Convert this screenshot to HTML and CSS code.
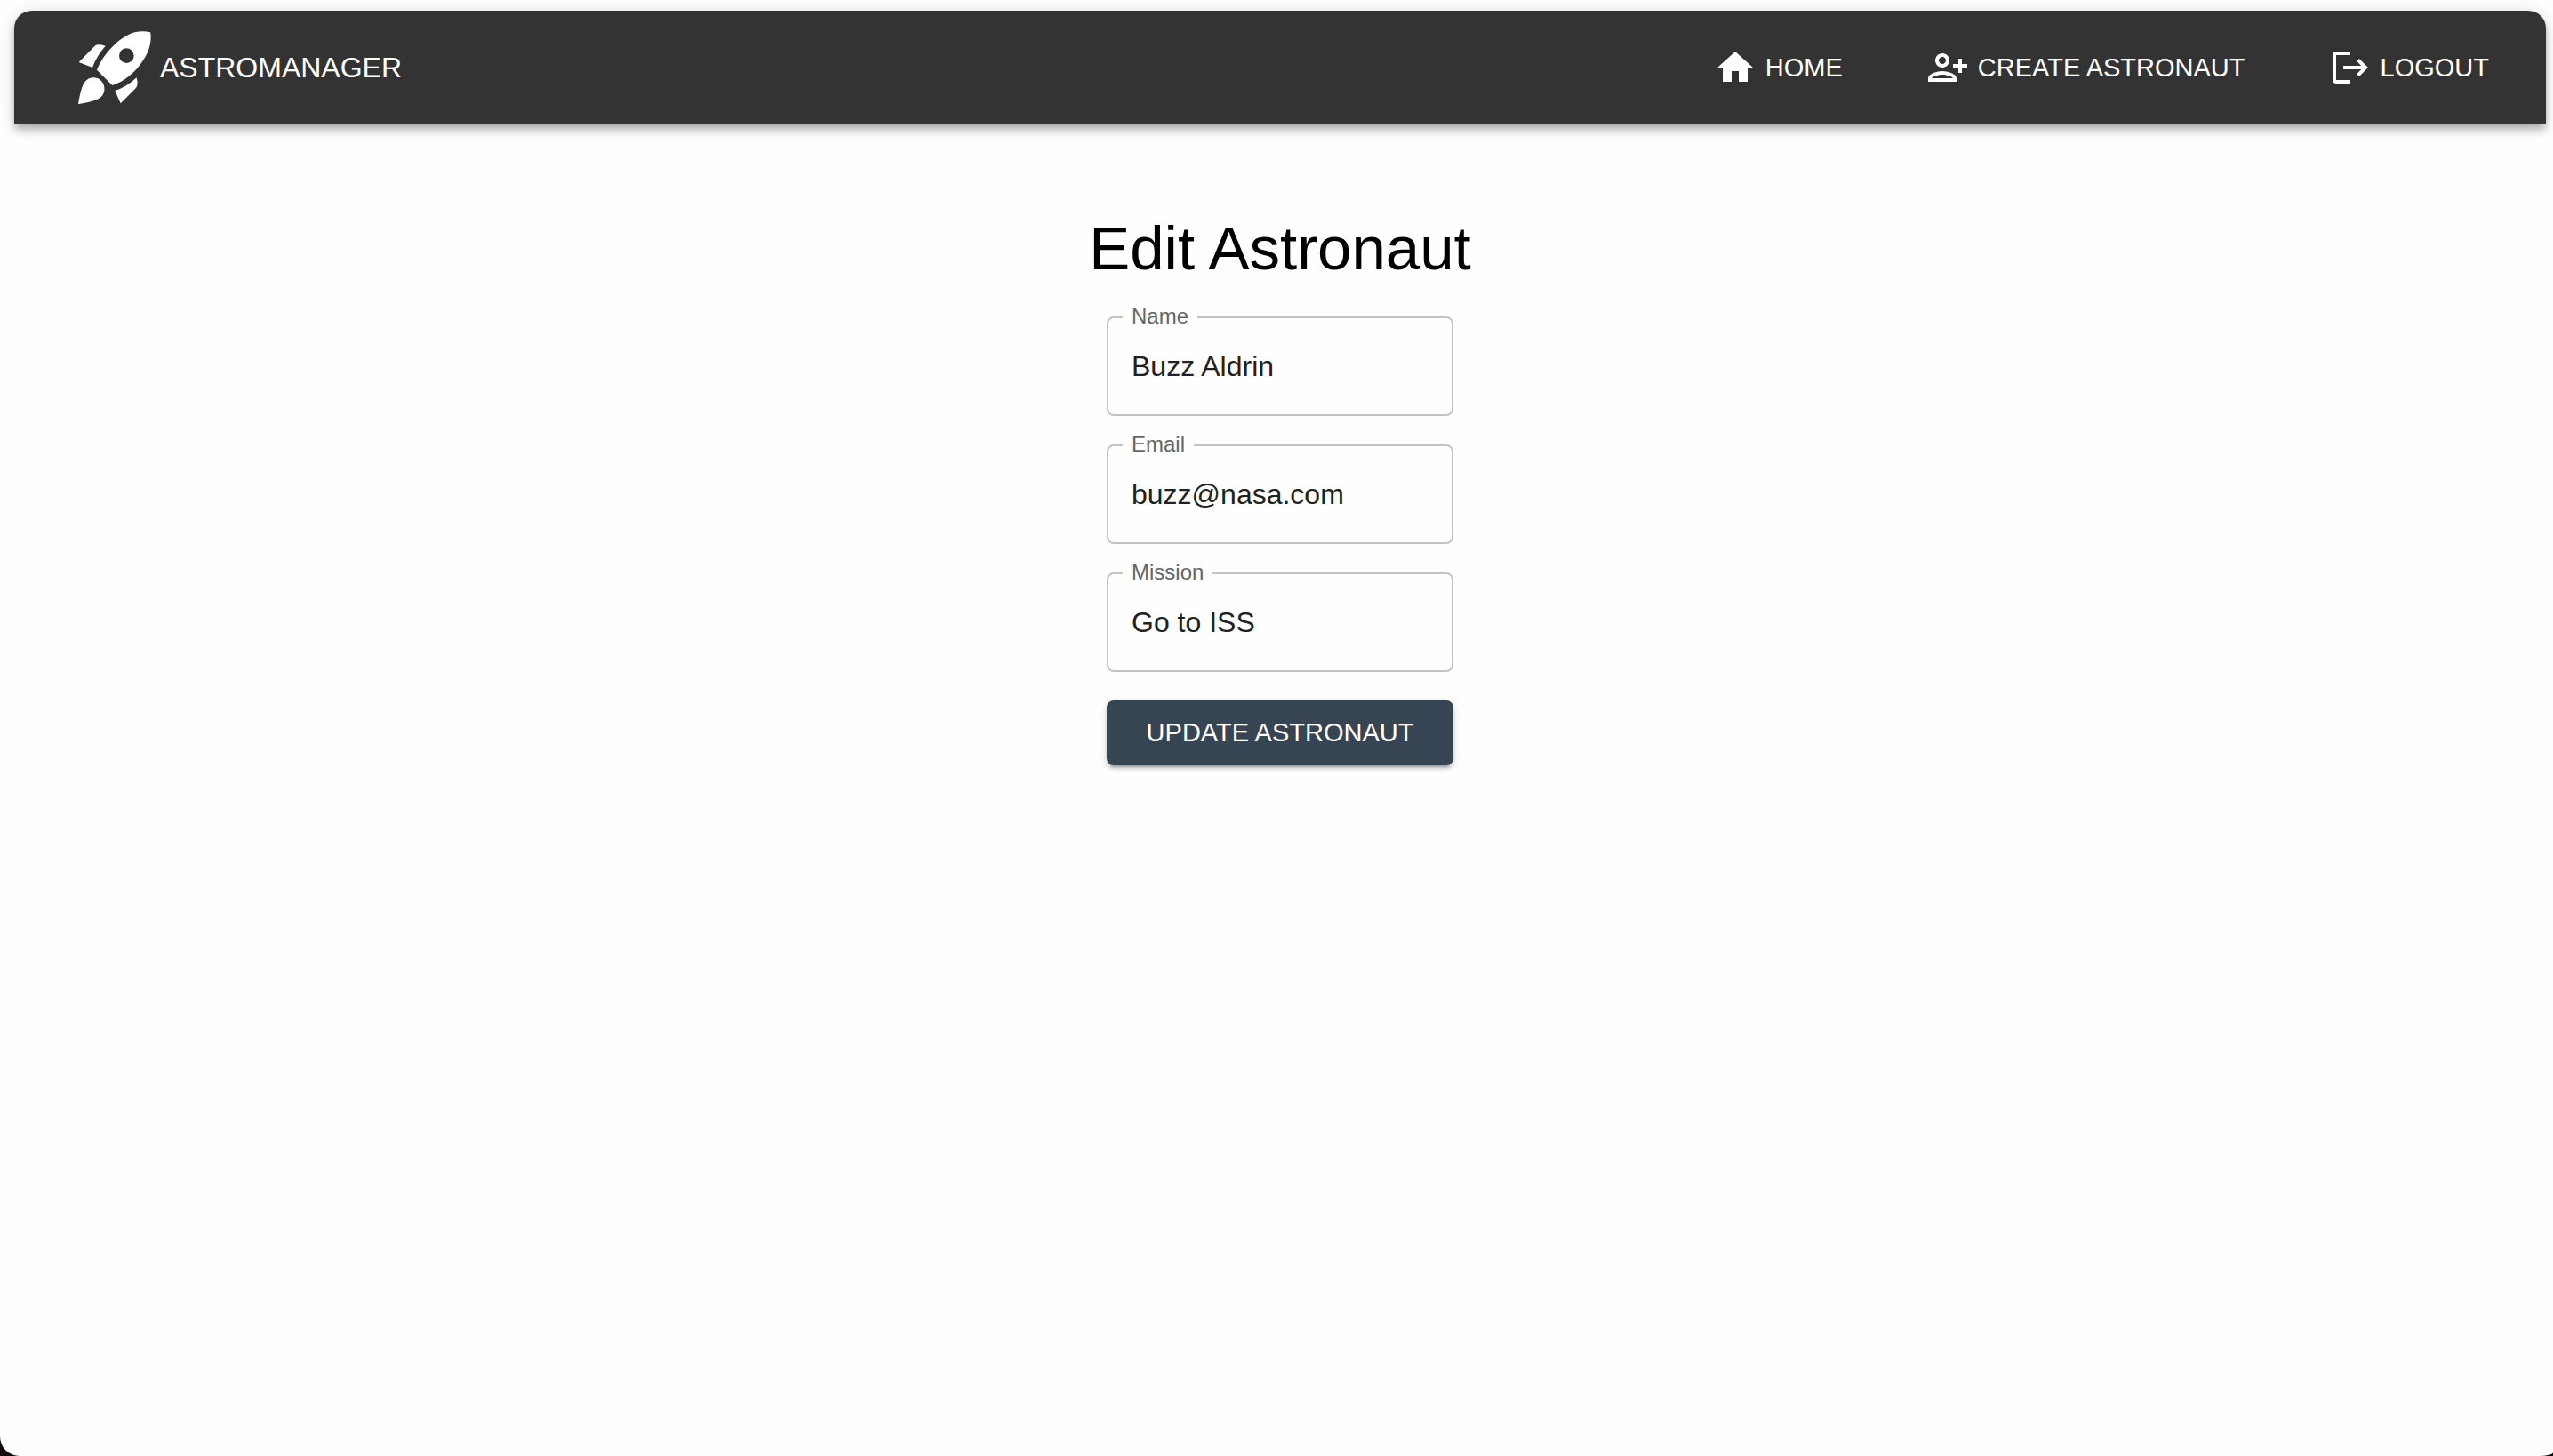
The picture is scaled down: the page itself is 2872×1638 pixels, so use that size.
FILE: index.html
```html
<!DOCTYPE html>
<html lang="en">
<head>
  <meta charset="utf-8">
  <meta name="viewport" content="width=device-width, initial-scale=1">
  <title>AstroManager</title>
  <link rel="stylesheet" href="styles.css">
</head>
<body>
  <header class="app-bar">
    <a class="brand" href="#">
      <svg class="brand-logo" viewBox="24 29 246 246" aria-hidden="true">
        <path fill-rule="evenodd" d="M267 33C268 33 268 34 268 35C272 68 263 98 243 128C217 168 180 199 139 212L87 160C106 112 150 62 195 40C220 29 243 28 267 33ZM187 87a25 25 0 1 0 0 50a25 25 0 1 0 0-50Z"/>
        <path d="M26 134L77 82Q83 75 91 75Q103 75 116 79Q86 112 72 152Z"/>
        <path d="M221 186Q225 199 223 213Q222 218 218 222L167 273L148 230Q188 218 221 186Z"/>
        <path d="M24 275C29 244 37 208 50 196C64 182 89 183 101 196C116 210 116 237 102 250C88 264 54 270 24 275Z"/>
      </svg>
      <span>ASTROMANAGER</span>
    </a>
    <nav class="nav">
      <a class="nav-link" href="#">
        <svg class="nav-icon" viewBox="0 0 24 24" aria-hidden="true"><path d="M10 20v-6h4v6h5v-8h3L12 3 2 12h3v8z"/></svg>
        <span>HOME</span>
      </a>
      <a class="nav-link" href="#">
        <svg class="nav-icon" viewBox="0 0 24 24" aria-hidden="true"><path d="M13 8c0-2.210-1.790-4-4-4S5 5.790 5 8s1.790 4 4 4 4-1.790 4-4zm-2 0c0 1.100-.9 2-2 2s-2-.9-2-2 .9-2 2-2 2 .9 2 2zM1 18v2h16v-2c0-2.660-5.330-4-8-4s-8 1.340-8 4zm2 0c.2-.710 3.300-2 6-2 2.690 0 5.770 1.280 6 2H3zM20 15v-3h3v-2h-3V7h-2v3h-3v2h3v3h2z"/></svg>
        <span>CREATE ASTRONAUT</span>
      </a>
      <a class="nav-link" href="#">
        <svg class="nav-icon" viewBox="0 0 24 24" aria-hidden="true"><path d="m17 7-1.410 1.410L18.170 11H8v2h10.170l-2.580 2.580L17 17l5-5zM4 5h8V3H4c-1.100 0-2 .9-2 2v14c0 1.100.9 2 2 2h8v-2H4z"/></svg>
        <span>LOGOUT</span>
      </a>
    </nav>
  </header>

  <main class="content">
    <h1 class="title">Edit Astronaut</h1>
    <form class="form">
      <div class="field">
        <label class="field-label" for="name">Name</label>
        <input class="field-input" id="name" type="text" value="Buzz Aldrin">
      </div>
      <div class="field">
        <label class="field-label" for="email">Email</label>
        <input class="field-input" id="email" type="email" value="buzz@nasa.com">
      </div>
      <div class="field">
        <label class="field-label" for="mission">Mission</label>
        <input class="field-input" id="mission" type="text" value="Go to ISS">
      </div>
      <button class="submit" type="button">UPDATE ASTRONAUT</button>
    </form>
  </main>
</body>
</html>
```
FILE: styles.css
```css
* {
  box-sizing: border-box;
}

html {
  background: #120a0a;
}

body {
  min-height: 100vh;
  margin: 0;
  padding: 12px 8px 0 16px;
  border-radius: 0 0 16px 22px / 0 0 4px 22px;
  background: #fefefe;
  color: #000;
  font-family: "Liberation Sans", Arial, Helvetica, sans-serif;
  font-size: 32px;
}

.app-bar {
  display: flex;
  align-items: center;
  justify-content: space-between;
  min-height: 128px;
  padding: 0 64px 0 72px;
  border-radius: 20px 20px 0 0;
  background: #333;
  box-shadow:
    0 4px 8px -2px rgba(0, 0, 0, 0.2),
    0 8px 10px 0 rgba(0, 0, 0, 0.14),
    0 2px 20px 0 rgba(0, 0, 0, 0.12);
}

.brand,
.nav,
.nav-link {
  display: flex;
  align-items: center;
}

.brand,
.nav-link {
  color: #fff;
  text-decoration: none;
}

.brand {
  gap: 10px;
}

.brand-logo {
  width: 82px;
  height: 82px;
  fill: currentColor;
}

.nav {
  gap: 94px;
}

.nav-link {
  gap: 10px;
  font-size: 29px;
}

.nav-icon {
  width: 48px;
  height: 48px;
  fill: currentColor;
}

.content {
  display: flex;
  flex-direction: column;
  align-items: center;
  padding-top: 98px;
}

.title {
  margin: 0 0 34px;
  font-size: 69px;
  font-weight: 400;
  line-height: 84px;
}

.form {
  display: flex;
  flex-direction: column;
  gap: 32px;
  width: 390px;
  max-width: 100%;
}

.field {
  position: relative;
}

.field-label {
  position: absolute;
  top: -14px;
  left: 18px;
  padding: 0 10px;
  background: #fefefe;
  color: #666;
  font-size: 24px;
  line-height: 28px;
}

.field-input {
  display: block;
  width: 100%;
  height: 112px;
  padding: 0 26px;
  border: 2px solid #c4c4c4;
  border-radius: 8px;
  background: transparent;
  color: #212121;
  font: inherit;
}

.submit {
  padding: 12px 0;
  border: 0;
  border-radius: 8px;
  background: #374454;
  box-shadow:
    0 6px 2px -4px rgba(0, 0, 0, 0.2),
    0 4px 4px 0 rgba(0, 0, 0, 0.14),
    0 2px 10px 0 rgba(0, 0, 0, 0.12);
  color: #fff;
  font-family: inherit;
  font-size: 29px;
  line-height: 49px;
}
```
